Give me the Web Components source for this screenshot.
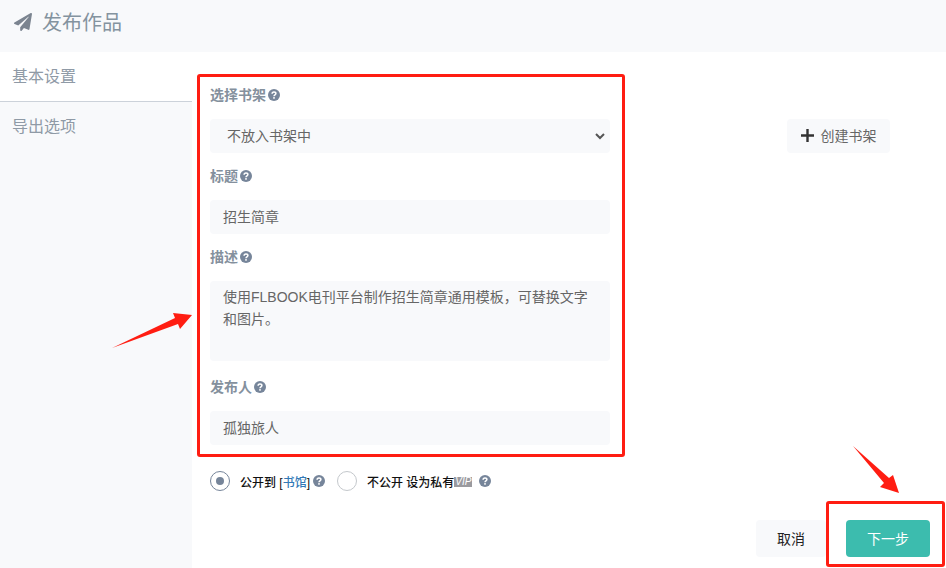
<!DOCTYPE html>
<html lang="zh">
<head>
<meta charset="utf-8">
<title>发布作品</title>
<style>
  html, body { margin: 0; height: 568px; overflow: hidden; background: #f8f9fb; }
  body { font-family: "Liberation Sans", "Noto Sans CJK SC", sans-serif; font-size: 14px; position: relative; }
</style>
</head>
<body>
<publish-page>
  <pub-header slot="header">发布作品</pub-header>
  <pub-sidebar slot="sidebar">
    <side-tab active>基本设置</side-tab>
    <side-tab>导出选项</side-tab>
  </pub-sidebar>

  <form-group label="选择书架">
    <div style="display:flex;gap:177px">
      <text-field select>不放入书架中</text-field>
      <ui-button plus>创建书架</ui-button>
    </div>
  </form-group>
  <form-group label="标题"><text-field>招生简章</text-field></form-group>
  <form-group label="描述" tall>
    <text-field area>使用FLBOOK电刊平台制作招生简章通用模板，可替换文字和图片。</text-field>
  </form-group>
  <form-group label="发布人"><text-field>孤独旅人</text-field></form-group>

  <visibility-row></visibility-row>

  <div slot="footer" style="display:flex;justify-content:flex-end;gap:20px">
    <ui-button cancel>取消</ui-button>
    <ui-button primary>下一步</ui-button>
  </div>
</publish-page>
<annot-layer></annot-layer>

<script>
class PublishPage extends HTMLElement {
  constructor() {
    super();
    this.attachShadow({ mode: "open" });
    this.shadowRoot.innerHTML = `
      <style>
        :host { display: flex; flex-direction: column; height: 568px; }
        .body { display: flex; flex: 1; min-height: 0; }
        .main { flex: 1; background: #fff; padding: 32px 16px 0 18px; }
        .foot { margin-top: 28px; }
      </style>
      <slot name="header"></slot>
      <div class="body">
        <slot name="sidebar"></slot>
        <div class="main">
          <slot></slot>
          <div class="foot"><slot name="footer"></slot></div>
        </div>
      </div>
    `;
  }
}

class PubHeader extends HTMLElement {
  constructor() {
    super();
    this.attachShadow({ mode: "open" });
    this.shadowRoot.innerHTML = `
      <style>
        :host { display: flex; align-items: center; gap: 10px; height: 52px; box-sizing: border-box; padding: 0 0 7px 14px; color: #84939f; font-size: 20px; line-height: 28px; }
        svg { width: 18px; height: 18px; margin-top: -2px; fill: #7b8490; }
      </style>
      <svg viewBox="0 0 512 512"><path d="M476 3.2L12.5 270.6c-18.1 10.4-15.8 35.6 2.2 43.2L121 358.4l287.3-253.2c5.5-4.9 13.3 2.6 8.6 8.3L176 407v80.5c0 23.6 28.5 32.9 42.5 15.8L282 426l124.6 52.2c14.2 6 30.4-2.9 33-18.2l72-432C515 7.8 493.3-6.8 476 3.2z"/></svg>
      <slot></slot>
    `;
  }
}

class PubSidebar extends HTMLElement {
  constructor() {
    super();
    this.attachShadow({ mode: "open" });
    this.shadowRoot.innerHTML = `
      <style>
        :host { display: block; width: 192px; flex: none; }
      </style>
      <slot></slot>
    `;
  }
}

class SideTab extends HTMLElement {
  constructor() {
    super();
    this.attachShadow({ mode: "open" });
    this.shadowRoot.innerHTML = `
      <style>
        :host { display: block; height: 50px; box-sizing: border-box; padding-left: 12px; line-height: 50px; font-size: 16px; color: #8f9aa6; }
        :host([active]) { background: #fff; border-bottom: 1px solid #ccd2da; }
      </style>
      <slot></slot>
    `;
  }
}

class HelpIcon extends HTMLElement {
  constructor() {
    super();
    this.attachShadow({ mode: "open" });
    this.shadowRoot.innerHTML = `
      <style>
        :host { display: inline-block; width: 12px; height: 12px; flex: none; }
        svg { display: block; width: 12px; height: 12px; }
      </style>
      <svg viewBox="0 0 12 12">
        <circle cx="6" cy="6" r="6" fill="#76859a"/>
        <path d="M4.1 4.7c0-1.1.8-1.8 1.9-1.8s1.9.7 1.9 1.6c0 1.4-1.9 1.3-1.9 2.7" fill="none" stroke="#fff" stroke-width="1.5"/>
        <rect x="5.2" y="8.1" width="1.6" height="1.6" fill="#fff"/>
      </svg>
    `;
  }
}

class FormGroup extends HTMLElement {
  constructor() {
    super();
    this.attachShadow({ mode: "open" });
    this.shadowRoot.innerHTML = `
      <style>
        :host { display: block; margin-bottom: 12px; }
        :host([tall]) { margin-bottom: 15px; }
        .label { display: flex; align-items: center; gap: 2px; height: 21px; margin-bottom: 14px; font-size: 14px; font-weight: 700; color: #84909d; line-height: 21px; }
        #t { padding-top: 2px; }
      </style>
      <div class="label"><span id="t"></span><help-icon></help-icon></div>
      <slot></slot>
    `;
  }
  connectedCallback() {
    this.shadowRoot.getElementById("t").textContent = this.getAttribute("label");
  }
}

class TextField extends HTMLElement {
  constructor() {
    super();
    this.attachShadow({ mode: "open" });
    this.shadowRoot.innerHTML = `
      <style>
        :host { display: flex; align-items: center; justify-content: space-between; box-sizing: border-box; width: 400px; height: 34px; flex: none; padding: 0 13px; background: #f8f9fb; border-radius: 4px; color: #666; font-size: 14px; line-height: 22px; }
        :host([select]) { padding: 0 3px 0 17px; }
        :host([area]) { display: block; height: 80px; padding: 5px 13px; line-height: 22px; }
        svg { display: none; width: 10px; height: 7px; margin-right: 2px; fill: none; stroke: #555; stroke-width: 2; }
        :host([select]) svg { display: block; }
      </style>
      <div><slot></slot></div>
      <svg viewBox="0 0 10 7"><path d="M1 1l4 4 4-4"/></svg>
    `;
  }
}

class UiButton extends HTMLElement {
  constructor() {
    super();
    this.attachShadow({ mode: "open" });
    this.shadowRoot.innerHTML = `
      <style>
        :host { display: flex; align-items: center; justify-content: center; gap: 7px; box-sizing: border-box; height: 37px; padding-bottom: 2px; border-radius: 4px; font-size: 14px; }
        :host([plus]) { width: 103px; height: 34px; background: #f8f9fb; color: #666; }
        :host([cancel]) { width: 70px; background: #f8f9fb; color: #222; }
        :host([primary]) { width: 84px; background: #3cbcae; color: #fff; }
        svg { display: none; width: 13px; height: 13px; stroke: #333; stroke-width: 2.4; }
        :host([plus]) svg { display: block; }
      </style>
      <svg viewBox="0 0 13 13"><path d="M6.5 0v13M0 6.5h13"/></svg>
      <slot></slot>
    `;
  }
}

class VisibilityRow extends HTMLElement {
  constructor() {
    super();
    this.attachShadow({ mode: "open" });
    this.shadowRoot.innerHTML = `
      <style>
        :host { display: flex; align-items: center; height: 22px; margin-top: 25px; font-size: 12px; font-weight: 500; color: #111; white-space: nowrap; }
        .radio { box-sizing: border-box; width: 20px; height: 20px; flex: none; border-radius: 50%; border: 1px solid #c4c8cc; background: #fff; display: flex; align-items: center; justify-content: center; }
        .radio.on { border: 1.5px solid #76859a; }
        .radio.on i { display: block; width: 8px; height: 8px; border-radius: 50%; background: #76859a; }
        .txt { margin-left: 10px; }
        a { color: #337ab7; text-decoration: none; }
        help-icon { margin-left: 3px; }
        .vip { display: inline-block; width: 18px; height: 10px; background: #9a9a9f; color: #fff; font: italic 10px/10px "Liberation Sans", sans-serif; text-align: center; position: relative; top: -2px; }
      </style>
      <span class="radio on"><i></i></span>
      <span class="txt">公开到 [<a>书馆</a>]</span>
      <help-icon></help-icon>
      <span class="radio" style="margin-left:12px"></span>
      <span class="txt">不公开 设为私有<span class="vip">VIP</span></span>
      <help-icon style="margin-left:7px"></help-icon>
    `;
  }
}

class AnnotLayer extends HTMLElement {
  constructor() {
    super();
    this.attachShadow({ mode: "open" });
    this.shadowRoot.innerHTML = `
      <style>
        :host { position: absolute; inset: 0; pointer-events: none; }
        .box { position: absolute; box-sizing: border-box; border: 3px solid #ff1d12; border-radius: 3px; }
        svg { position: absolute; inset: 0; width: 946px; height: 568px; fill: #ff1d12; }
      </style>
      <div class="box" style="left:197px;top:74px;width:428px;height:383px"></div>
      <div class="box" style="left:826px;top:501px;width:119px;height:66px"></div>
      <svg viewBox="0 0 946 568">
        <polygon points="112,348 175,318 173,313 192,315 180,329 178,324"/>
        <polygon points="853,446 889,478 893,475 899,493 880,487 884,483"/>
      </svg>
    `;
  }
}

customElements.define("publish-page", PublishPage);
customElements.define("pub-header", PubHeader);
customElements.define("pub-sidebar", PubSidebar);
customElements.define("side-tab", SideTab);
customElements.define("help-icon", HelpIcon);
customElements.define("form-group", FormGroup);
customElements.define("text-field", TextField);
customElements.define("ui-button", UiButton);
customElements.define("visibility-row", VisibilityRow);
customElements.define("annot-layer", AnnotLayer);
</script>
</body>
</html>
